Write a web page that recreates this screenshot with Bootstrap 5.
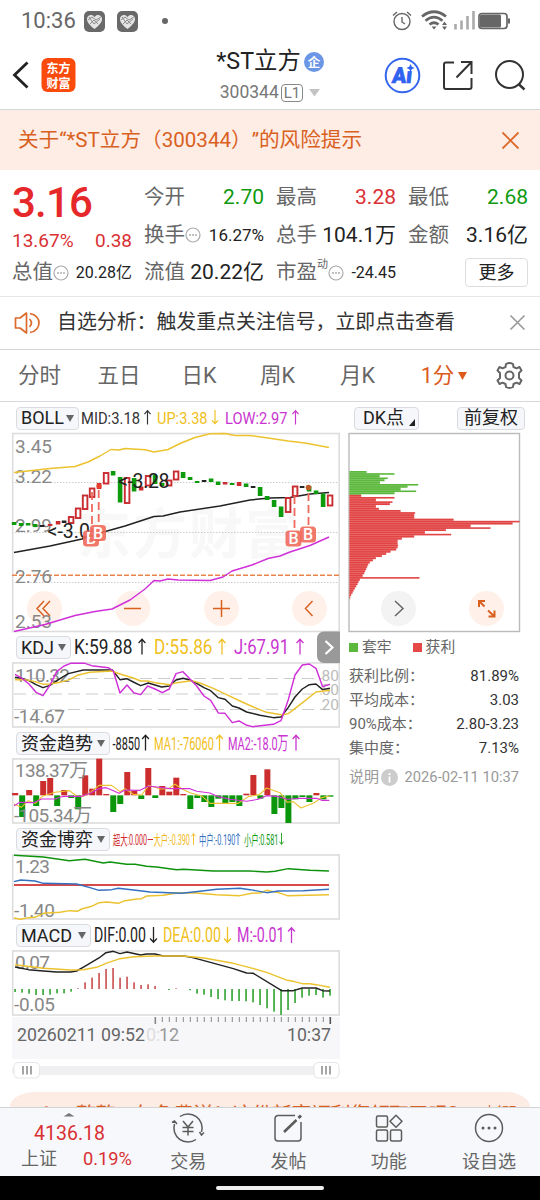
<!DOCTYPE html>
<html lang="zh-CN">
<head>
<meta charset="utf-8">
<meta name="viewport" content="width=device-width, initial-scale=1">
<title>*ST立方 300344</title>
<link href="https://cdn.jsdelivr.net/npm/bootstrap@5.3.0/dist/css/bootstrap.min.css" rel="stylesheet">
<style>
  body{width:540px;height:1200px;overflow:hidden;background:#fff;color:#333;font-family:Roboto,"Noto Sans CJK SC",sans-serif;font-size:20px;line-height:1;white-space:nowrap}
  svg{display:block;flex:none;overflow:visible}
  svg text{font-family:Roboto,"Noto Sans CJK SC",sans-serif}
  .status{height:40px;padding:2px 30px 0 21px;color:#666;font-size:22px}
  .topbar{height:70px;border-bottom:1px solid #d4d6da}
  .side{width:180px}
  .stock-name{font-size:23.3px;color:#222;height:28px}
  .stock-code{font-size:17.5px;color:#777}
  .level{border:1.5px solid #888;border-radius:4px;font-size:15px;padding:1px 2px;line-height:14px;margin-left:2px}
  .notice{height:60px;background:#fdede4;color:#d9601f;padding:1px 21px 0 18px;font-size:20.6px;text-spacing-trim:space-all;font-feature-settings:"chws" 0,"halt" 0}
  .quote{height:127px;padding:8px 12px 0;border-bottom:1px solid #e6e6e6;display:grid;grid-template-columns:repeat(4,120px);column-gap:12px;grid-template-rows:38px 38px 37px}
  .cell{display:flex;align-items:center;justify-content:space-between;color:#222}
  .lbl{color:#666;font-size:20.5px;display:flex;align-items:center}
  .val{font-size:21px}.val-s{font-size:17px}
  .up{color:#d93034}.down{color:#109a10}
  .price{font-size:42px;font-weight:500;color:#e6282b;letter-spacing:-.8px;margin-top:12px}
  .chg{font-size:19px;padding-top:11px}
  .more{width:63px;height:29px;border:1px solid #ddd;border-radius:4px;font-size:18px}
  .signal-row{height:53px;border-bottom:1px solid #d6d8db;padding:0 15px 0 14px;font-size:19.9px}
  .tabs{height:52px;border-bottom:1px solid #d6d8db;color:#666;font-size:21.5px}
  .tab{position:relative;text-align:center}
  .left{width:345px}
  .ind{height:32px;padding:0 0 0 16px}
  .pick{height:23px;border:1px solid #d9dbe0;border-radius:4px;background:#f6f7fa;color:#222;font-size:18px;display:flex;align-items:center;justify-content:space-between;padding:0 4px 0 4px;margin-top:1px}
  .tri{border:4px solid transparent;border-top:7px solid #666;border-bottom:0}
  .axis{fill:#888;font-size:19px}
  .ln{fill:none;stroke-width:1.45;stroke-linejoin:round}
  .ln *{vector-effect:non-scaling-stroke}
  .frame{fill:none;stroke:#ddd;stroke-width:1.6}
  .times{margin:2px 0 0 12px;width:328px;height:42px;background:#f7f7fa}
  .range{margin-left:12px;width:328px;height:24px}
  .stat{height:23.8px;font-size:15px;color:#666;width:170px}
  .stat b{font-weight:400;color:#333}
  .promo{top:1092px;left:10px;width:520px;height:15px;background:#fdece4;color:#d9601f;overflow:hidden;border-radius:24px 24px 0 0/15px 15px 0 0}
  .bottombar{height:69px;background:#f7f8fb;border-top:1px solid #d2d3d6;color:#666;font-size:18px}
  .bottombar .item{width:100.3px;display:flex;flex-direction:column;align-items:center;justify-content:space-between;padding:5px 0 5px}
  .gesture{height:24px;background:#000}
  .gesture span{width:108px;height:4px;border-radius:2px;background:#eee}
  .workspace{height:657px}
</style>
</head>
<body>
<svg width="0" height="0" class="position-absolute">
  <defs>
    <path id="au" d="M0 16V1M-3.400 4.500 0 .8 3.400 4.500" fill="none" stroke-width="1.300"/>
    <path id="ad" d="M0 0V15M-3.400 11.500 0 15.200 3.400 11.500" fill="none" stroke-width="1.300"/>
    <g id="dots"><circle cx="8" cy="8" r="7" fill="none" stroke="#aaa" stroke-width="1.2"/><path d="M4.2 8h1.6M7.2 8h1.6M10.2 8h1.6" stroke="#999" stroke-width="1.6"/></g>
    <g id="heartapp"><rect width="21" height="21" rx="5" fill="#696969"/><path d="M10.5 18C6 14.5 2.600 11 3 7.500 3.500 3.500 8.500 2.800 10.500 6 12.500 2.800 17.500 3.500 18 7.500 18.400 11 15 14.500 10.500 18Z" fill="#e4e4e4"/><path d="M4 9 8 6 12 9 17 6M6 13 10 9 14 13M5 6 10 13 16 8" fill="none" stroke="#777" stroke-width=".8"/></g>
    <g id="badgeB"><rect x="-8" y="-8" width="16" height="16" rx="3.500" fill="#ee6a5c" opacity=".9"/><text x="0" y="5.800" text-anchor="middle" font-size="16" font-weight="500" fill="#fff">B</text></g>
  </defs>
</svg>

<div class="status d-flex align-items-center">
  <span>10:36</span>
  <svg class="ms-2" width="21" height="21"><use href="#heartapp"/></svg>
  <svg style="margin-left:12px" width="21" height="21"><use href="#heartapp"/></svg>
  <svg style="margin-left:24px" width="6" height="6"><circle cx="3" cy="3" r="3" fill="#666"/></svg>
  <svg class="ms-auto" width="119" height="24" viewBox="391 9 119 24" fill="none" stroke="#666">
    <g stroke-width="1.4"><circle cx="402" cy="21.500" r="8"/><path d="M402 17v5l3 2M393 15.500l4-3.500M411 15.500l-4-3.500"/></g>
    <g stroke-width="2.700"><path d="M422 16.500q12-9.500 24 0M425.500 20.700q8.500-7 17 0M429.500 24.500q4.500-3.500 9 0"/></g>
    <path d="M431.500 26.500h5l-2.500 3z" fill="#666" stroke="none"/><path d="M442 25l2.500-3.500 2.500 3.500zM442 26.500l2.500 3.500 2.500-3.500z" fill="#666" stroke="none"/>
    <path d="M455.500 24v5.500M461.500 20.500v9M467.500 16v13.500M473.500 11v18.500" stroke="#aaa" stroke-width="2.600"/>
    <rect x="479" y="13.500" width="28" height="15" rx="3" stroke-width="1.700"/><rect x="480" y="14.500" width="21" height="13" rx="1.500" fill="#666" stroke="none"/><path d="M509 18.500v5" stroke-width="2"/>
  </svg>
</div>

<header class="topbar d-flex align-items-center justify-content-between">
  <div class="side d-flex align-items-center">
    <svg width="80" height="44" viewBox="0 54 80 44">
      <path d="M27.500 63.500 14.500 76l13 12.500" fill="none" stroke="#222" stroke-width="2.800"/>
      <rect x="41.500" y="59" width="34" height="34" rx="6" fill="#fb4b0c"/>
      <text x="46.500" y="74" font-size="12.500" font-weight="700" fill="#fff" textLength="24" lengthAdjust="spacingAndGlyphs">东方</text>
      <text x="46.500" y="88.500" font-size="12.500" font-weight="700" fill="#fff" textLength="24" lengthAdjust="spacingAndGlyphs">财富</text>
    </svg>
  </div>
  <div class="d-flex flex-column align-items-center">
    <div class="stock-name d-flex align-items-center">*ST立方
      <svg style="margin-left:3px" width="20" height="20" viewBox="0 0 20 20"><circle cx="10" cy="10" r="10" fill="#6b96e6"/><text x="10" y="14.500" text-anchor="middle" font-size="12.500" font-weight="700" fill="#fff">企</text></svg>
    </div>
    <div class="stock-code d-flex align-items-center mt-2">300344<span class="level">L1</span>
      <svg style="margin-left:6px" width="11" height="8"><path d="M0 0h11L5.500 7.500z" fill="#c4c4c4"/></svg></div>
  </div>
  <div class="side d-flex justify-content-end">
    <svg width="160" height="44" viewBox="380 53 160 44" fill="none" stroke="#333" stroke-width="2">
      <circle cx="402.500" cy="75.500" r="16.800" stroke="#3566ee"/>
      <text transform="translate(391.500 83) skewX(-6)" font-size="22" font-weight="900" fill="#2f62f0" stroke="#2f62f0" stroke-width=".7" textLength="20" lengthAdjust="spacingAndGlyphs">Aı</text>
      <path d="M410.500 64l1.300 2.700 2.700 1.300-2.700 1.300-1.300 2.700-1.300-2.700-2.700-1.300 2.700-1.300z" fill="#2f62f0" stroke="none"/>
      <path d="M454 62.500h-8a2 2 0 0 0-2 2V87a2 2 0 0 0 2 2h23.500a2 2 0 0 0 2-2v-9M456.500 77.500 471 62.500M461 62h10.500v12"/>
      <circle cx="509.500" cy="74.500" r="13.500"/><path d="M518.500 84l6 5.500" stroke-width="2.400"/>
    </svg>
  </div>
</header>

<div class="notice d-flex align-items-center justify-content-between">
  <span>关于“*ST立方（300344）”的风险提示</span>
  <svg width="17" height="17"><path d="M.5.5l16 16M16.500.5l-16 16" stroke="#dc6a2c" stroke-width="1.800"/></svg>
</div>

<section class="quote">
  <div class="cell"><span class="price" id="price">3.16</span></div>
  <div class="cell"><span class="lbl">今开</span><span class="val down">2.70</span></div>
  <div class="cell"><span class="lbl">最高</span><span class="val up">3.28</span></div>
  <div class="cell"><span class="lbl">最低</span><span class="val down">2.68</span></div>
  <div class="cell chg"><span class="up">13.67%</span><span class="up">0.38</span></div>
  <div class="cell"><span class="lbl">换手<svg width="17" height="16"><use href="#dots"/></svg></span><span class="val-s">16.27%</span></div>
  <div class="cell"><span class="lbl">总手</span><span class="val">104.1万</span></div>
  <div class="cell"><span class="lbl">金额</span><span class="val">3.16亿</span></div>
  <div class="cell"><span class="lbl">总值<svg width="17" height="16"><use href="#dots"/></svg></span><span style="font-size:16px">20.28亿</span></div>
  <div class="cell"><span class="lbl">流值</span><span class="val">20.22亿</span></div>
  <div class="cell"><span class="lbl">市盈<small style="font-size:11px;margin-top:-17px">动</small><svg width="17" height="16"><use href="#dots"/></svg></span><span style="font-size:16px">-24.45</span></div>
  <div class="cell justify-content-end"><span class="more d-flex align-items-center justify-content-center">更多</span></div>
</section>

<div class="signal-row d-flex align-items-center">
  <svg width="28" height="24" viewBox="0 0 28 24" fill="none" stroke="#dc6a2c" stroke-width="1.700"><path d="M1.500 7v10h4.500l6.500 5V2L6 7z" stroke-linejoin="round"/><path d="M15.500 8q4 4 0 8"/><path d="M16 2.500c12 2 12 17 0 19"/></svg>
  <span style="margin-left:15px">自选分析：触发重点关注信号，立即点击查看</span>
  <svg class="ms-auto" width="15" height="15"><path d="M.5-.5l14 14M14.500-.5l-14 14" stroke="#999" stroke-width="1.600"/></svg>
</div>

<nav class="tabs d-flex align-items-center">
  <span class="tab" style="width:79px">分时</span>
  <span class="tab" style="width:80px">五日</span>
  <span class="tab" style="width:80px">日K</span>
  <span class="tab" style="width:77px">周K</span>
  <span class="tab" style="width:83px">月K</span>
  <span class="tab d-flex align-items-center justify-content-center" style="width:90px;color:#dc5a1c">1分<svg class="ms-1" width="9" height="8"><path d="M0 0h9L4.500 8z" fill="#dc5a1c"/></svg></span>
  <svg width="27" height="27" viewBox="-13.500 -13.500 27 27" style="margin-left:7px" fill="none" stroke="#666" stroke-width="2" stroke-linejoin="round"><path d="M-3.500-11.500Q0-13.500 3.500-11.500L4-8.500 7-7.200 10-8.500 12-5 9.500-2.500V2.500L12 5 10 8.500 7 7.200 4 8.500 3.500 11.500Q0 13.500-3.500 11.500L-4 8.500-7 7.200-10 8.500-12 5-9.500 2.500V-2.500L-12-5-10-8.500-7-7.200-4-8.500Z"/><circle r="4"/></svg>
</nav>

<div class="workspace d-flex align-items-start">
  <main class="left">
    <div class="ind d-flex align-items-center" style="height:31px">
      <span class="pick" style="width:63px">BOLL<i class="tri"></i></span>
      <svg width="266" height="31" viewBox="79 402 266 31" font-size="16.500">
        <text x="81" y="423.500" textLength="59" lengthAdjust="spacingAndGlyphs" fill="#333">MID:3.18</text>
        <text x="157" y="423.500" textLength="50.500" lengthAdjust="spacingAndGlyphs" fill="#f0c020">UP:3.38</text>
        <text x="225" y="423.500" textLength="62.500" lengthAdjust="spacingAndGlyphs" fill="#c935d0">LOW:2.97</text>
        <use href="#au" transform="translate(147.500 410) scale(.9)" stroke="#333"/><use href="#ad" transform="translate(215 410) scale(.9)" stroke="#f0c020"/><use href="#au" transform="translate(295.500 410) scale(.9)" stroke="#c935d0"/>
      </svg>
    </div>
    <svg width="345" height="198" viewBox="0 433 345 198" id="kline">
      <text x="77" y="554" font-size="54" font-weight="700" fill="#f8f8f8" textLength="222">东方财富</text>
      <path d="M12 482.500H339M12 532.500H339M12 582.500H339" stroke="#ccc" stroke-dasharray="1.500 1.500"/>
      <rect class="frame" x="12.700" y="433.500" width="326.500" height="198"/>
      <path d="M12 575.300H339" stroke="#e8834a" stroke-width="1.400" stroke-dasharray="5 2"/>
      <g fill="#fff1e9"><circle cx="44.500" cy="608.500" r="17.500"/><circle cx="132.700" cy="608.500" r="17.500"/><circle cx="221.500" cy="608.500" r="17.500"/><circle cx="309.500" cy="608.500" r="17.500"/></g>
      <g class="axis"><text x="15" y="453">3.45</text><text x="15" y="483">3.22</text><text x="15" y="532">2.99</text><text x="15" y="582.500">2.76</text><text x="15" y="628">2.53</text></g>
      <g fill="none" stroke="#d9601f" stroke-width="1.500"><path d="M44 601l-7 7.500 7 7.500M50 601l-7 7.500 7 7.500M124 608.500h17M213 608.500h17M221.500 600v17M312.500 601l-7 7.500 7 7.500"/></g>
      <g class="ln">
        <polyline stroke="#ecc22e" points="14,472.500 50,468.500 75,466.500 88,462 100,456 111,449.500 119,450 125,448.500 145,449.700 154,452 168,449.500 180,443.500 195,437.500 210,433.800 225,433.500 235,435.500 250,435.500 268,438 288,441 305,443 329,447.500"/>
        <polyline stroke="#d030d8" points="14,631.500 45,624.500 75,615.500 95,611.500 112,609 130,600 145,589 154,580.500 160,581 168,579 178,580 210,580.500 223,577 232,571 252,565 268,558.500 280,556 290,552 310,545.500 329,537"/>
        <polyline stroke="#222" points="14,552.500 50,546 82,539 100,533 125,526 154,516.500 163,516 180,512 220,506 250,500 270,498 290,497.500 310,494 329,492.500"/>
      </g>
      <g id="candles"></g>
      <path d="M92 492v38M98.700 490v36M294.500 496v34M308.500 493v34" stroke="#ee6a5c" stroke-width="1.800" stroke-dasharray="8 4"/>
      <circle cx="308.500" cy="487.500" r="2.800" fill="#c05a28"/><circle cx="99" cy="486" r="2.600" fill="#e8402c"/>
      <g fill="#222" font-size="19.500"><text x="118" y="488" textLength="51.500">&lt;-3.28</text><text x="47.500" y="538">&lt;-3.0</text></g>
      <use href="#badgeB" x="91" y="538.500"/><use href="#badgeB" x="98" y="533"/><use href="#badgeB" x="293.500" y="538.500"/><use href="#badgeB" x="308" y="534.500"/>
    </svg>

    <div class="ind d-flex align-items-center position-relative">
      <span class="pick" style="width:55px">KDJ<i class="tri"></i></span>
      <svg width="274" height="32" viewBox="71 631 274 32" font-size="20">
        <text x="74" y="654" textLength="58.500" lengthAdjust="spacingAndGlyphs" fill="#222">K:59.88</text><text x="154" y="654" textLength="58.500" lengthAdjust="spacingAndGlyphs" fill="#f0c020">D:55.86</text><text x="234" y="654" textLength="55" lengthAdjust="spacingAndGlyphs" fill="#c935d0">J:67.91</text>
        <use href="#au" x="142" y="638.500" stroke="#222"/><use href="#au" x="222" y="638.500" stroke="#f0c020"/><use href="#au" x="300" y="638.500" stroke="#c935d0"/>
        <path d="M340 631.500h-16a7 7 0 0 0-7 7V656a7 7 0 0 0 7 7h16z" fill="#999"/><path d="M325.500 641l7 6.500-7 6.500" fill="none" stroke="#fff" stroke-width="2.200"/>
      </svg>
    </div>
    <svg width="345" height="64" viewBox="0 663 345 64">
      <rect class="frame" x="12.700" y="663" width="326.500" height="64"/>
      <path d="M14 678.500H322M14 694H322M14 709.500H322" stroke="#ccc" stroke-dasharray="12 6"/>
      <g class="axis"><text x="15" y="681.500" textLength="55">110.32</text><text x="14" y="723" textLength="51">-14.67</text></g>
      <g fill="#bbb" font-size="15.500" text-anchor="end"><text x="339" y="681">80</text><text x="339" y="694.500">50</text><text x="339" y="709.500">20</text></g>
      <g class="ln" transform="translate(0 635) scale(.3333)">
        <polyline stroke="#222" points="45,127 66,130 87,137 108,149 129,158 150,151 180,131 205,116 250,105 337,105 360,134 380,131 400,141 422,152 445,144 485,156 508,153 528,135 549,130 570,135 590,145 612,158 632,167 655,188 675,193 697,213 717,219 740,231 780,241 820,248 843,246 865,217 885,186 907,162 928,149 948,147 968,164 990,160"/>
        <polyline stroke="#ecc22e" points="45,134 75,134 105,140 130,148 150,147 180,142 210,133 232,121 270,112 335,108 360,117 400,129 422,138 443,138 465,143 510,149 530,143 575,137 600,144 640,160 680,179 720,198 760,216 800,232 848,240 866,235 905,205 948,171 990,166"/>
        <polyline stroke="#d030d8" points="45,118 66,130 87,147 108,172 129,182 150,150 170,110 192,93 212,85 255,85 275,92 325,98 340,108 360,174 381,150 402,174 422,179 443,153 465,162 487,173 508,162 528,116 549,110 570,132 590,153 612,183 632,196 655,234 675,235 697,263 717,258 738,270 758,275 820,268 843,257 865,194 885,120 907,90 928,87 948,100 968,155 990,148"/>
      </g>
    </svg>

    <div class="ind d-flex align-items-center">
      <span class="pick" style="width:94px">资金趋势<i class="tri"></i></span>
      <svg width="235" height="32" viewBox="110 727 235 32" font-size="19">
        <text x="112.500" y="750" textLength="27.500" lengthAdjust="spacingAndGlyphs" fill="#222">-8850</text><text x="154" y="750" textLength="60" lengthAdjust="spacingAndGlyphs" fill="#f0c020">MA1:-76060</text><text x="228" y="750" textLength="60.500" lengthAdjust="spacingAndGlyphs" fill="#c935d0">MA2:-18.0万</text>
        <use href="#au" x="145.500" y="734.500" stroke="#222"/><use href="#au" x="219.500" y="734.500" stroke="#f0c020"/><use href="#au" x="296" y="734.500" stroke="#c935d0"/>
      </svg>
    </div>
    <svg width="345" height="64" viewBox="0 759 345 64">
      <rect class="frame" x="12.700" y="759" width="326.500" height="64"/>
      <g transform="translate(0 730) scale(.3333)"><g id="flow"></g></g>
      <g class="axis"><text x="15" y="777" textLength="73">138.37万</text><text x="14" y="821.500" textLength="78">-105.34万</text></g>
      <g class="ln" transform="translate(0 730) scale(.3333)" style="stroke-width:1.100">
        <polyline stroke="#ecc22e" points="42,222 64,232 85,212 106,220 127,199 165,187 208,182 230,198 250,199 270,188 297,166 335,166 360,185 375,176 400,193 425,195 446,166 480,177 505,176 525,163 548,178 570,188 607,199 630,220 715,220 745,200 778,194 800,174 840,188 862,217 880,215 903,234 940,220 965,203 990,198"/>
        <polyline stroke="#d030d8" points="42,227 60,217 100,218 125,207 165,207 190,199 245,199 270,190 297,176 318,173 335,180 357,190 375,180 420,181 446,168 510,176 570,176 590,184 630,189 655,200 690,208 740,214 775,208 800,197 830,199 862,208 900,205 950,205 965,211 988,211"/>
      </g>
    </svg>

    <div class="ind d-flex align-items-center">
      <span class="pick" style="width:94px">资金博弈<i class="tri"></i></span>
      <svg width="235" height="32" viewBox="110 823 235 32" font-size="14">
        <text transform="translate(113 844.500) scale(.515 1)" textLength="66" fill="#d02c30">超大:0.000</text><path d="M147.500 839.500h5.500" stroke="#d02c30"/>
        <text transform="translate(153.500 844.500) scale(.52 1)" textLength="70" fill="#f0b820">大户:-0.390</text><text transform="translate(199 844.500) scale(.52 1)" textLength="70" fill="#3470c0">中户:-0.190</text><text transform="translate(244 844.500) scale(.52 1)" textLength="66" fill="#109a10">小户:0.581</text>
        <use href="#au" transform="translate(193.500 833) scale(.6 .75)" stroke="#f0b820"/><use href="#au" transform="translate(238 833) scale(.6 .75)" stroke="#3470c0"/><use href="#ad" transform="translate(281.500 833) scale(.6 .75)" stroke="#109a10"/>
      </svg>
    </div>
    <svg width="345" height="64" viewBox="0 855 345 64">
      <rect class="frame" x="12.700" y="855" width="326.500" height="64"/>
      <g class="axis"><text x="15" y="873" textLength="35">1.23</text><text x="14" y="917" textLength="41">-1.40</text></g>
      <g class="ln" transform="translate(0 825) scale(.3333)">
        <path d="M42 180H987" stroke="#d84a4a" stroke-width="2"/>
        <polyline stroke="#ecc22e" points="42,279 62,283 85,278 105,277 130,265 180,262 210,257 232,259 245,252 275,244 297,233 320,231 355,235 375,227 410,222 425,221 440,213 490,211 530,204 580,203 650,209 720,212 755,205 785,203 800,196 835,203 862,212 987,209"/>
        <polyline stroke="#3470c0" points="42,170 62,165 105,168 130,175 230,177 270,188 297,196 335,194 355,190 420,197 450,201 545,205 600,199 650,193 720,190 750,194 800,203 835,198 910,197 987,193"/>
        <polyline stroke="#0f930f" points="42,91 130,96 208,107 255,103 310,114 330,111 380,118 405,118 440,124 470,126 530,134 550,133 640,138 750,138 800,141 825,139 865,131 930,136 987,138"/>
      </g>
    </svg>

    <div class="ind d-flex align-items-center">
      <span class="pick" style="width:75px">MACD<i class="tri"></i></span>
      <svg width="254" height="32" viewBox="91 919 254 32" font-size="19.500">
        <text x="94" y="942" textLength="52" lengthAdjust="spacingAndGlyphs" fill="#222">DIF:0.00</text><text x="163" y="942" textLength="58" lengthAdjust="spacingAndGlyphs" fill="#f0c020">DEA:0.00</text><text x="237" y="942" textLength="47.500" lengthAdjust="spacingAndGlyphs" fill="#c935d0">M:-0.01</text>
        <use href="#ad" x="153.500" y="927" stroke="#222"/><use href="#ad" x="227.500" y="927" stroke="#f0c020"/><use href="#au" x="291.500" y="927" stroke="#c935d0"/>
      </svg>
    </div>
    <svg width="345" height="64" viewBox="0 951 345 64">
      <rect class="frame" x="12.700" y="951" width="326.500" height="64"/>
      <g transform="translate(0 920) scale(.3333)"><g id="macd"></g></g>
      <g class="axis"><text x="15" y="969" textLength="35">0.07</text><text x="14" y="1011" textLength="41">-0.05</text></g>
      <g class="ln" transform="translate(0 920) scale(.3333)">
        <polyline stroke="#222" points="45,141 85,149 130,153 170,156 212,156 230,153 253,140 297,114 318,98 340,94 360,101 381,96 422,105 440,102 465,102 490,108 550,108 575,112 612,122 700,146 740,159 760,160 845,212 880,212 907,204 948,204 968,212 990,213"/>
        <polyline stroke="#ecc22e" points="45,134 130,145 212,150 250,149 290,142 318,130 360,116 402,110 465,108 550,108 612,114 700,130 750,143 800,157 862,181 880,184 907,191 930,191 948,194 990,202"/>
      </g>
    </svg>
    <div class="times">
      <svg width="328" height="42" viewBox="12 1017 328 42" font-size="18" fill="#666">
        <g id="ticks"></g>
        <text x="146" y="1041" fill="#ddd">0:</text><text x="159" y="1041" fill="#999">12</text>
        <text x="17" y="1041" textLength="128" lengthAdjust="spacingAndGlyphs">20260211 09:52</text>
        <text x="287" y="1041" textLength="44" lengthAdjust="spacingAndGlyphs">10:37</text>
      </svg>
    </div>
    <div class="range">
      <svg width="328" height="24" viewBox="12 1059 328 24">
        <rect x="12" y="1066" width="328" height="9" rx="4" fill="#f0f0f2"/>
        <g fill="#fff" stroke="#e6e6e8"><rect x="14" y="1062.500" width="25.500" height="15.500" rx="4"/><rect x="314" y="1062.500" width="25" height="15.500" rx="4"/></g>
        <path d="M23 1066v8.500M27 1066v8.500M31 1066v8.500M322 1066v8.500M326 1066v8.500M330 1066v8.500" stroke="#777" stroke-width="1.300"/>
      </svg>
    </div>
  </main>

  <aside style="width:195px">
    <div class="d-flex align-items-center" style="height:31px;padding:0 15px 0 9px">
      <span class="pick position-relative" style="width:65px;padding-left:8px">DK点<svg width="6" height="7" style="margin-top:8px;margin-right:-1px"><path d="M6 0v7H0z" fill="#222"/></svg></span>
      <span class="pick ms-auto justify-content-center" style="width:68px">前复权</span>
    </div>
    <svg width="180" height="198" viewBox="345 433 180 198">
      <rect x="349" y="433.500" width="170.500" height="198" fill="none" stroke="#bbb" stroke-width="1.400"/>
      <g id="chips"></g>
      <circle cx="398.500" cy="608.500" r="17.500" fill="#f3f3f3"/><path d="M395 601l8 7.500-8 7.500" fill="none" stroke="#666" stroke-width="1.500"/>
      <circle cx="486.500" cy="608.500" r="17.500" fill="#fff1e9"/><path d="M479 607v-6h6M479.500 601.500l5 5M488.500 616.500h6v-6M494 616l-6-5.500" fill="none" stroke="#d9601f" stroke-width="2"/>
    </svg>
    <div class="d-flex align-items-center" style="height:33px;padding-left:4px;font-size:14.800px;color:#666">
      <svg width="9" height="9"><path d="M0 0h9v9H0z" fill="#5cb83c"/></svg><span style="margin-left:4px">套牢</span>
      <svg width="9" height="9" style="margin-left:21px"><path d="M0 0h9v9H0z" fill="#e64848"/></svg><span style="margin-left:4px">获利</span>
    </div>
    <div style="padding:1px 0 0 4px">
      <div class="stat d-flex align-items-center justify-content-between">获利比例：<b>81.89%</b></div>
      <div class="stat d-flex align-items-center justify-content-between">平均成本：<b>3.03</b></div>
      <div class="stat d-flex align-items-center justify-content-between">90%成本：<b>2.80-3.23</b></div>
      <div class="stat d-flex align-items-center justify-content-between">集中度：<b>7.13%</b></div>
      <div class="stat d-flex align-items-center justify-content-between" style="height:35px;color:#999">说明<svg width="17" height="17" style="margin-left:-5px"><circle cx="8.500" cy="8.500" r="8.500" fill="#ccc"/><path d="M8.500 4v2M8.500 7.500v6" stroke="#fff" stroke-width="1.800"/></svg><span style="font-size:14.700px">2026-02-11 10:37</span></div>
    </div>
  </aside>
</div>

<!-- promo strip, cut off by the fixed bottom bar -->
<div class="promo position-absolute">
  <svg width="520" height="15" viewBox="10 1092 520 15" fill="#d9601f">
    <text x="40" y="1118.500" font-size="19" font-weight="700">1</text>
    <text x="76" y="1121.500" font-size="20.300" textLength="392">整整一年免费送！这份新客福利您领取了吗？</text>
    <text x="483" y="1116" font-size="13">去领取</text>
  </svg>
</div>

<div class="position-absolute start-0 w-100" style="top:1107px">
  <nav class="bottombar d-flex">
    <div style="width:138px">
      <svg width="138" height="68" viewBox="0 1108 138 68">
        <path d="M63.500 1116.500l5.500-3.500 5.500 3.500z" fill="#777"/>
        <text x="34" y="1140" font-size="19.500" textLength="71" lengthAdjust="spacingAndGlyphs" fill="#d93034">4136.18</text>
        <text x="21" y="1164.500" font-size="18" fill="#666">上证</text>
        <text x="83" y="1164.500" font-size="19" textLength="49" lengthAdjust="spacingAndGlyphs" fill="#d93034">0.19%</text>
      </svg>
    </div>
    <div class="item"><svg width="32" height="30" viewBox="-16 -15 32 30" fill="none" stroke="#5c5c5c" stroke-width="1.500"><path d="M-8-11.500A14 14 0 0 1 13.500 4M8 11.500A14 14 0 0 1-13.500-4M-16-5.500l2.500-1.500 2.500 3M16 4.500l-2.500 2.500-2-3M-5-7l5 6 5-6M0-1v8.500M-5.500-.5h11M-5.500 3.500h11"/></svg>交易</div>
    <div class="item"><svg width="28" height="30" viewBox="-14 -15 28 30" fill="none" stroke="#5c5c5c" stroke-width="1.500"><path d="M7-12.500h-17a3 3 0 0 0-3 3V10a3 3 0 0 0 3 3H10a3 3 0 0 0 3-3V-6"/><path d="M-4 4 8.500-8" stroke-width="2.600"/><path d="M10.500-10l2.500-2.500" stroke-width="3"/></svg>发帖</div>
    <div class="item"><svg width="28" height="30" viewBox="-14 -15 28 30" fill="none" stroke="#5c5c5c" stroke-width="1.500"><rect x="-12.500" y="-12" width="11" height="11" rx="1.500"/><rect x="-12.500" y="2" width="11" height="11" rx="1.500"/><rect x="1.500" y="2" width="11" height="11" rx="1.500"/><path d="M7-12.800l6 6-6 6-6-6z" stroke-linejoin="round"/></svg>功能</div>
    <div class="item"><svg width="30" height="30" viewBox="-15 -15 30 30" fill="none" stroke="#5c5c5c" stroke-width="1.500"><circle r="13.500"/><g fill="#5c5c5c" stroke="none"><circle cx="-6" r="1.500"/><circle r="1.500"/><circle cx="6" r="1.500"/></g></svg>设自选</div>
  </nav>
  <div class="gesture d-flex align-items-center justify-content-center"><span></span></div>
</div>

<script>
const draw = (id, html) => document.getElementById(id).innerHTML = html;
// [x centre, top, bottom, kind]: g falling, r rising (hollow), s rising (solid), k flat
const candles = [[14,522,525,'g'],[21,523,526,'g'],[28,523,525.5,'g'],[35,524,527,'g'],[42,525,527,'k'],[50,524,526,'s'],[58,521,524.5,'s'],[64,520.5,523,'k'],[71,517,523,'r'],[78,508.500,518,'r'],[85,495.500,509,'r'],[92,488.500,497,'r'],[99,483,489,'s'],[106,473,483.500,'r'],[113,471,475.500,'g'],[120,477,502.500,'g'],[127,478,503,'r'],[134,478,491.500,'g'],[141,486.500,490.500,'s'],[148,476,485.500,'r'],[155,475,484,'g'],[162,483,486,'g'],[169,480.500,485.500,'r'],[176,471.500,479.500,'r'],[183,472,478,'g'],[190,477,480,'g'],[197,481,483,'g'],[204,480,482,'k'],[211,478.500,482,'g'],[218,481.500,485,'g'],[225,482,484.500,'s'],[232,483,485,'g'],[239,482,486,'s'],[246,483.500,487,'g'],[253,486,488,'k'],[260,487,496,'g'],[267,496,500,'g'],[274,500,507,'g'],[281,506.500,517,'g'],[288,498,512,'r'],[295,486.500,496,'r'],[302,486,488,'k'],[309,486,491.500,'g'],[316,490.500,494,'g'],[323,493.500,507,'g'],[330,495.500,505.500,'r']];
const tone = {g:'#0d9a0d', r:'#c92c30', s:'#c92c30', k:'#222'};
draw('candles', candles.map(([x,a,b,k]) => k === 'r'
  ? `<rect x="${x-2.2}" y="${a}" width="4.6" height="${b-a}" fill="#fff" stroke="${tone.r}" stroke-width="1.9"/>`
  : `<rect x="${x-2.2}" y="${a}" width="4.6" height="${b-a}" fill="${tone[k]}"/>`).join(''));
const flow = [7,-65,16,-32,43,52,-32,16,-8,-42,60,20,110,4,-50,-26,70,14,-11,82,-8,28,11,53,4,-41,-8,-20,-35,-10,-25,-20,-32,5,61,-10,78,-56,-38,-83,-12,-5,-20,7,-12,-4];
draw('flow', flow.map((v,i) => `<rect x="${36.5+21.02*i}" y="${v>0?196-v:196}" width="18" height="${Math.abs(v)}" fill="${v>0?'#cc2e2e':'#0a960a'}"/>`).join(''));
const macd = [-9,-11,-14,-18,-18,-17,-13,-13,-8,2,20,34,48,60,63,34,37,20,12,14,9,0,-3,2,0,-4,-14,-17,-24,-30,-34,-36,-36,-37,-40,-48,-58,-68,-78,-63,-42,-26,-20,-18,-26,-20];
draw('macd', macd.map((v,i) => `<rect x="${42.5+21*i}" y="${v>0?207-v:207}" width="5.5" height="${Math.abs(v)}" fill="${v>0?'#d06464':'#4aae4a'}"/>`).join(''));
let t = '';
for (let i = 0; i < 26; i++) { const big = i === 0 || i === 25; t += `<path d="M${155.3+7*i} 1017v${big?7:5}" stroke="${i===25?'#555':'#888'}" stroke-width="${big?1.6:1}"/>`; }
draw('ticks', t);
// chip distribution, one bar per price step
const green = [78,162,117,142,132,118,233,201,180,227,162];
const red = [62,162,106,156,148,106,115,180,224,221,221,339,537,516,390,450,316,253,332,221,184,171,171,173,171,167,150,137,124,106,97,88,83,80,77,74,71,66,237,58,54,51,47,43,39,36,32,29];
const all = [...green.map(v=>[v,'#5cb83c']), ...red.map(v=>[v,'#e24444'])];
draw('chips', all.map(([v,c],i) => {
  const y = 471 + 2.165*i, w = (v-27)/3, n = Math.min(v, (all[i+1]||[v])[0]);
  return `<rect x="349.5" y="${y+.7}" width="${(n-27)/3}" height="2.165" fill="${c}" opacity=".7"/><rect x="349.5" y="${y}" width="${w}" height="1.600" fill="${c}"/>`;
}).join(''));
</script>
<script src="https://cdn.jsdelivr.net/npm/bootstrap@5.3.0/dist/js/bootstrap.bundle.min.js"></script>
</body>
</html>
